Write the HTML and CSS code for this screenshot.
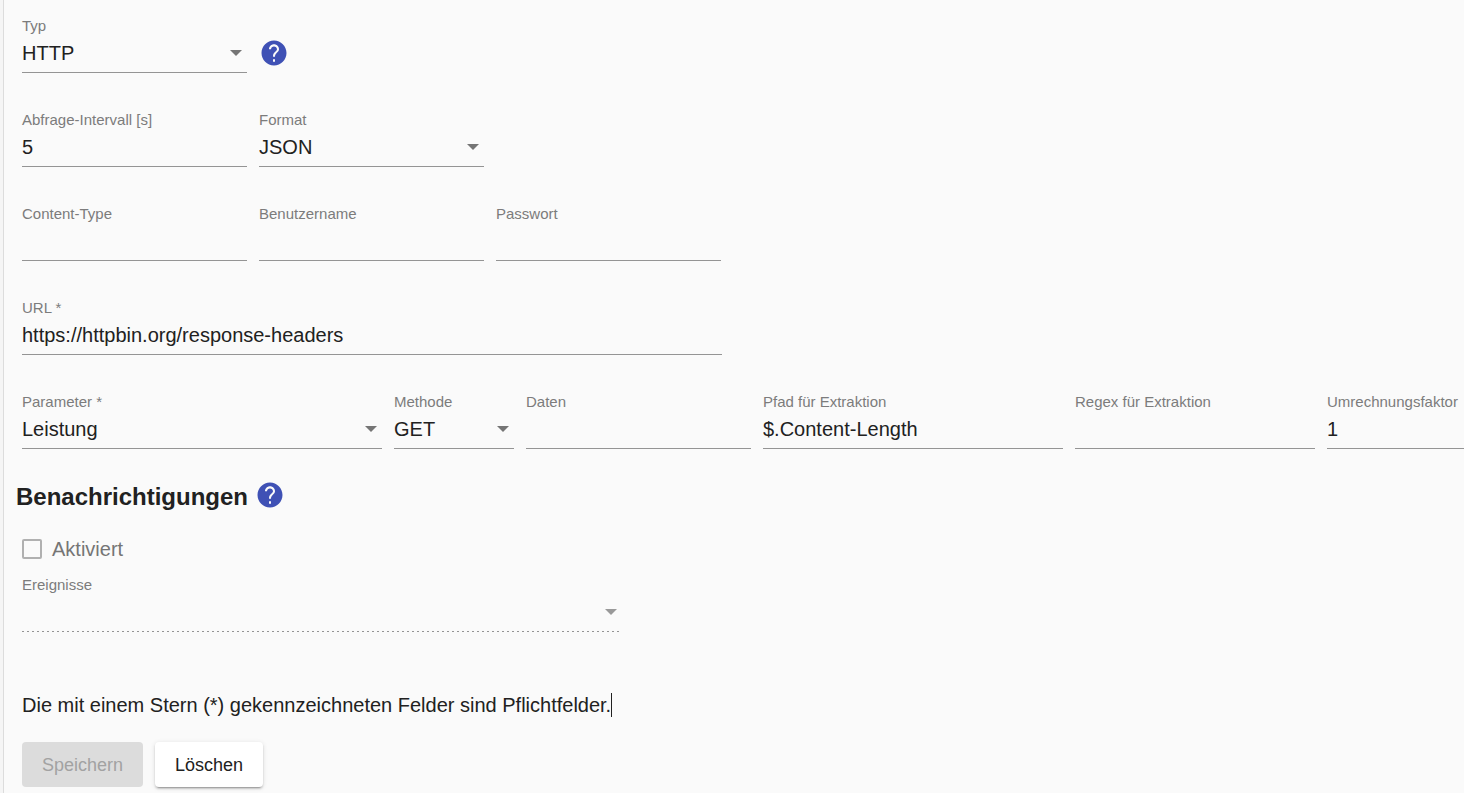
FILE: index.html
```html
<!DOCTYPE html>
<html lang="de">
<head>
    <meta charset="UTF-8">
    <meta name="viewport" content="width=device-width, initial-scale=1.0">
    <title>Stromzähler</title>
    <link rel="stylesheet" href="styles.css">
</head>
<body>

    <form class="panel">
        <div class="row">
            <div class="field">
                <label for="type">Typ</label>
                <div class="select"><select id="type"><option>HTTP</option></select></div>
            </div>
            <button type="button" class="help" aria-label="Hilfe">
                <svg viewBox="0 0 24 24"><path d="M12 2C6.48 2 2 6.48 2 12s4.48 10 10 10 10-4.48 10-10S17.52 2 12 2zm.8 17h-1.6v-2h1.6v2zm2.07-7.75l-.9.92C13.25 12.9 12.8 13.5 12.8 15h-1.6v-.5c0-1.1.45-2.1 1.17-2.83l1.24-1.26c.37-.36.79-.86.79-1.41 0-1.3-1.1-2.3-2.4-2.3s-2.4 1-2.4 2.3H8c0-2.21 1.79-4 4-4s4 1.79 4 4c0 .88-.46 1.68-1.13 2.25z"/></svg>
            </button>
        </div>

        <div class="row">
            <div class="field">
                <label for="interval">Abfrage-Intervall [s]</label>
                <input id="interval" type="text" value="5">
            </div>
            <div class="field">
                <label for="format">Format</label>
                <div class="select"><select id="format"><option>JSON</option></select></div>
            </div>
        </div>

        <div class="row">
            <div class="field">
                <label for="contentType">Content-Type</label>
                <input id="contentType" type="text">
            </div>
            <div class="field">
                <label for="username">Benutzername</label>
                <input id="username" type="text">
            </div>
            <div class="field">
                <label for="password">Passwort</label>
                <input id="password" type="password">
            </div>
        </div>

        <div class="row">
            <div class="field url">
                <label for="url">URL *</label>
                <input id="url" type="text" value="https://httpbin.org/response-headers">
            </div>
        </div>

        <div class="row">
            <div class="field parameter">
                <label for="parameter">Parameter *</label>
                <div class="select"><select id="parameter"><option>Leistung</option></select></div>
            </div>
            <div class="field method">
                <label for="method">Methode</label>
                <div class="select"><select id="method"><option>GET</option></select></div>
            </div>
            <div class="field">
                <label for="data">Daten</label>
                <input id="data" type="text">
            </div>
            <div class="field path">
                <label for="path">Pfad für Extraktion</label>
                <input id="path" type="text" value="$.Content-Length">
            </div>
            <div class="field regex">
                <label for="regex">Regex für Extraktion</label>
                <input id="regex" type="text">
            </div>
            <div class="field factor">
                <label for="factor">Umrechnungsfaktor</label>
                <input id="factor" type="text" value="1">
            </div>
        </div>

        <div class="section-title">
            <h2>Benachrichtigungen</h2>
            <button type="button" class="help" aria-label="Hilfe">
                <svg viewBox="0 0 24 24"><path d="M12 2C6.48 2 2 6.48 2 12s4.48 10 10 10 10-4.48 10-10S17.52 2 12 2zm.8 17h-1.6v-2h1.6v2zm2.07-7.75l-.9.92C13.25 12.9 12.8 13.5 12.8 15h-1.6v-.5c0-1.1.45-2.1 1.17-2.83l1.24-1.26c.37-.36.79-.86.79-1.41 0-1.3-1.1-2.3-2.4-2.3s-2.4 1-2.4 2.3H8c0-2.21 1.79-4 4-4s4 1.79 4 4c0 .88-.46 1.68-1.13 2.25z"/></svg>
            </button>
        </div>

        <div class="checkbox">
            <input id="enabled" type="checkbox" disabled>
            <label for="enabled">Aktiviert</label>
        </div>

        <div class="row">
            <div class="field events">
                <label for="events">Ereignisse</label>
                <div class="select"><select id="events" disabled><option></option></select></div>
            </div>
        </div>

        <p class="hint">Die mit einem Stern (*) gekennzeichneten Felder sind Pflichtfelder.<span class="caret"></span></p>

        <div class="actions">
            <button type="submit" class="button" disabled>Speichern</button>
            <button type="button" class="button">Löschen</button>
        </div>
    </form>

</body>
</html>
```
FILE: styles.css
```css
* {
    box-sizing: border-box;
}

body {
    margin: 0;
    padding-left: 3px;
    font-family: Arial, "Liberation Sans", sans-serif;
    font-size: 20px;
    line-height: 24px;
    color: #212121;
    background-color: #f5f5f5;
    overflow-x: hidden;
}

.panel {
    min-height: 100vh;
    padding: 17px 0 6px 12px;
    border-left: 1px solid #dcdcdc;
    background-color: #fafafa;
}

/* form fields */
.row {
    display: flex;
    align-items: center;
    gap: 12px;
    padding-left: 6px;
    margin-bottom: 38px;
}

.field {
    flex: none;
    width: 225px;
}

.field.url { width: 700px; }
.field.parameter { width: 360px; }
.field.method { width: 120px; }
.field.path { width: 300px; }
.field.regex { width: 240px; }
.field.factor { flex: 1; min-width: 135px; }
.field.events { width: 600px; }

.field label {
    display: block;
    font-size: 15px;
    line-height: 18px;
    color: #7c7c7c;
}

.field input,
.field select {
    display: block;
    width: 100%;
    height: 38px;
    margin: 0;
    padding: 6px 0 7px;
    font: inherit;
    color: inherit;
    border: 0;
    border-bottom: 1px solid #949494;
    border-radius: 0;
    background: none;
    outline: none;
    appearance: none;
}

.select {
    display: grid;
    align-items: center;
}

.select select,
.select::after {
    grid-area: 1 / 1;
}

.select::after {
    content: '';
    justify-self: end;
    margin: 0 5px 3px 0;
    border: 6px solid transparent;
    border-top-color: #757575;
    border-bottom: 0;
    pointer-events: none;
}

.field select:disabled {
    border-bottom-color: transparent;
    background: repeating-linear-gradient(to right, #949494 0 2px, transparent 2px 5px) left bottom / 100% 1px no-repeat border-box;
    opacity: 1;
}

.events .select::after {
    border-top-color: #999;
}

/* help icon */
.help {
    flex: none;
    width: 30px;
    height: 30px;
    padding: 0;
    border: 0;
    background: none;
    cursor: pointer;
}

.help svg {
    display: block;
    fill: #3f51b5;
}

.row .help {
    margin-top: 16px;
}

/* notifications */
.section-title {
    display: flex;
    gap: 7px;
    margin-top: -7px;
}

.section-title h2 {
    margin: 0;
    font-size: 24px;
    line-height: 34px;
}

.checkbox {
    display: flex;
    align-items: center;
    gap: 10px;
    padding-left: 6px;
    margin: 23px 0 15px;
    color: #757575;
}

.checkbox input {
    width: 20px;
    height: 20px;
    margin: 0;
    border: 2px solid #b0b0b0;
    border-radius: 2px;
    appearance: none;
}

.hint {
    margin: 0;
    padding: 23px 0 0 6px;
}

.caret {
    display: inline-block;
    height: 24px;
    border-left: 1px solid #212121;
    vertical-align: top;
}

.actions {
    display: flex;
    gap: 12px;
    padding-left: 6px;
    margin-top: 25px;
}

.button {
    height: 45px;
    padding: 0 20px;
    font: inherit;
    font-size: 18px;
    font-weight: 500;
    color: #212121;
    border: 0;
    border-radius: 4px;
    background-color: #fff;
    box-shadow: 0 3px 1px -2px rgba(0, 0, 0, 0.2), 0 2px 2px rgba(0, 0, 0, 0.14), 0 1px 5px rgba(0, 0, 0, 0.12);
}

.button:disabled {
    color: #a2a2a2;
    background-color: #dcdcdc;
    box-shadow: none;
}
```
